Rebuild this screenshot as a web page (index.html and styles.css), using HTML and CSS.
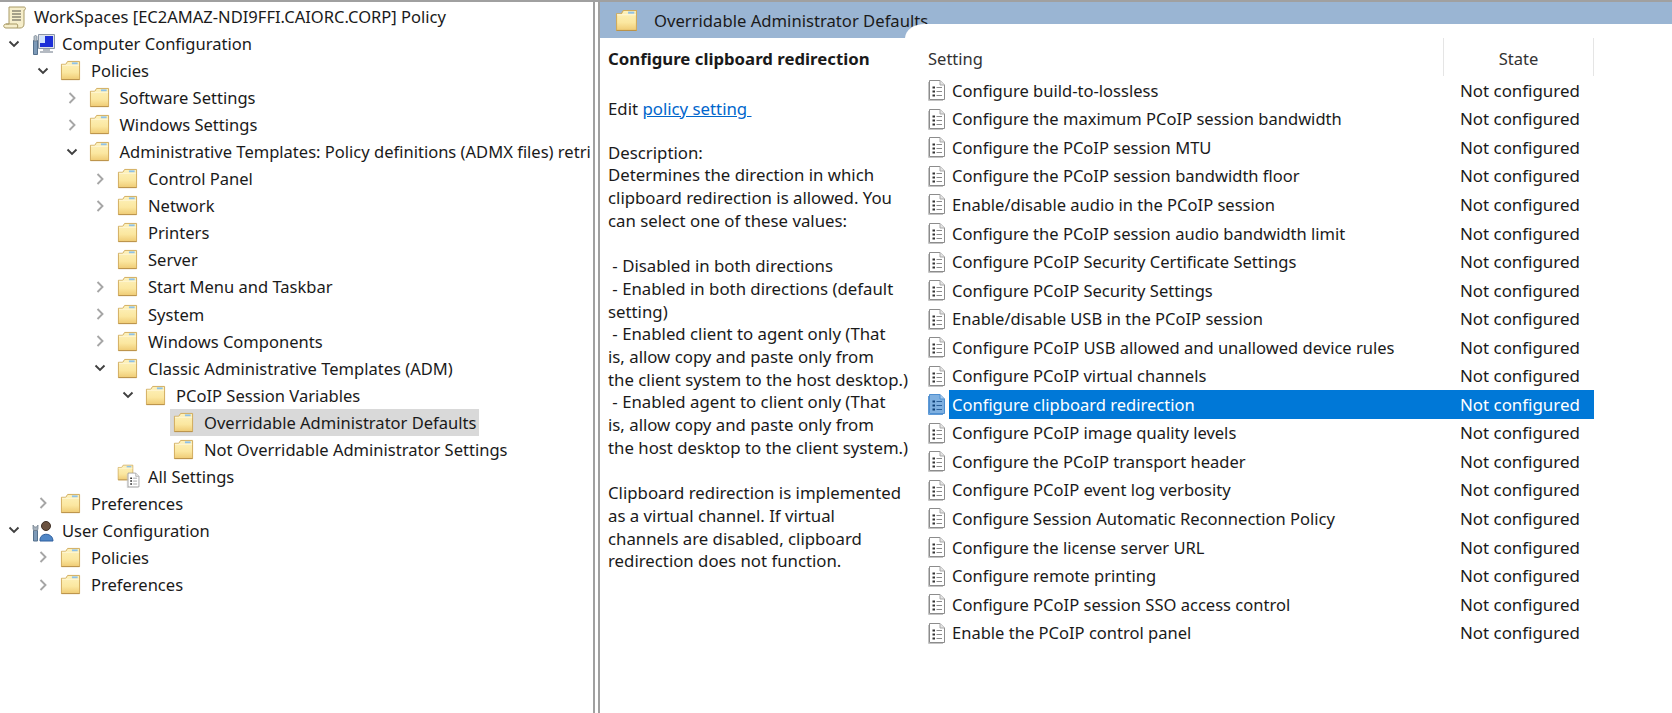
FILE: index.html
```html
<!DOCTYPE html>
<html>

<head>
    <title>Group Policy Management Editor</title>
    <link rel="stylesheet" href="styles.css">
</head>

<body>
    <svg class="defs" width="0" height="0">
        <defs>
            <linearGradient id="folderFill" x1="0" y1="0" x2="0" y2="1">
                <stop offset="0" stop-color="#fdf2bd" />
                <stop offset="0.6" stop-color="#fbe7a0" />
                <stop offset="1" stop-color="#efcb74" />
            </linearGradient>
            <symbol id="folder" viewBox="0 0 22 22">
                <path d="M1.5 4.5 V20.5 H20.5 V1.5 H8 L6 4.5 Z" fill="url(#folderFill)" stroke="#d0aa5a" />
                <path d="M1.5 20.5 H20.5" stroke="#b9924a" />
                <path d="M12.5 2.5 H18.5 V4.5 H12.5 Z" fill="#8fc1e8" />
                <path d="M2 5.5 H20" stroke="#fff8d8" />
            </symbol>
            <symbol id="policy" viewBox="0 0 20 22">
                <path d="M2.5 1.5 H13 L17.5 6 V20.5 H2.5 Z" fill="#fff" stroke="#8c8c8c" />
                <path d="M13 1.5 V6 H17.5" fill="#e4e4e4" stroke="#a8a8a8" />
                <path d="M1.5 3 V21.5 H16" fill="none" stroke="#c4c4c4" />
                <path d="M5.5 7.5 H8 V9.5 H5.5 Z M5.5 11.5 H8 V13.5 H5.5 Z M5.5 15.5 H8 V17.5 H5.5 Z" fill="#333" />
                <path d="M9.5 8.5 H15 M9.5 12.5 H15 M9.5 16.5 H15" stroke="#8a8a8a" />
            </symbol>
            <symbol id="policyOn" viewBox="0 0 20 22">
                <path d="M2.5 1.5 H13 L17.5 6 V20.5 H2.5 Z" fill="#7fb0e0" stroke="#4f8fd0" />
                <path d="M13 1.5 V6 H17.5" fill="#a9cbec" stroke="#4f8fd0" />
                <path d="M1.5 3 V21.5 H16" fill="none" stroke="#5f9ad6" />
                <path d="M5.5 7.5 H8 V9.5 H5.5 Z M5.5 11.5 H8 V13.5 H5.5 Z M5.5 15.5 H8 V17.5 H5.5 Z" fill="#0e3f75" />
                <path d="M9.5 8.5 H15 M9.5 12.5 H15 M9.5 16.5 H15" stroke="#2b5f99" />
            </symbol>
            <symbol id="open" viewBox="0 0 12 12">
                <path d="M1.5 3.5 L6 8 L10.5 3.5" fill="none" stroke="#404040" stroke-width="1.9" />
            </symbol>
            <symbol id="closed" viewBox="0 0 12 12">
                <path d="M3.5 1 L8.5 6 L3.5 11" fill="none" stroke="#a6a6a6" stroke-width="1.9" />
            </symbol>
        </defs>
    </svg>

    <div class="window">
        <div class="tree-pane">
            <div class="tree-row root">
                <svg class="icon-big" viewBox="0 0 24 24">
                    <path d="M6 2 H21 C23 2 23 5 21 5 V19 C21 22 19 23 17 23 H3 C0 23 0 19 3 19 H6 Z" fill="#f6eecb" stroke="#a89a66" />
                    <path d="M9 6 H18 M9 9 H18 M9 12 H18 M9 15 H18" stroke="#55524a" />
                    <path d="M3 19 H14 C15 20 15 22 14 23" fill="none" stroke="#a89a66" />
                </svg>
                <span class="tree-label">WorkSpaces [EC2AMAZ-NDI9FFI.CAIORC.CORP] Policy</span>
            </div>
            <div class="tree-row lv0">
                <svg class="arrow"><use href="#open" /></svg>
                <svg class="icon-big" viewBox="0 0 24 24">
                    <path d="M7.5 2.5 H23.5 V16.5 H7.5 Z" fill="#dfe3e8" stroke="#8b97a8" />
                    <path d="M9 4 H22 V15 H9 Z" fill="#1c2fd8" />
                    <path d="M9 4 H14 V11 H9 Z" fill="#cfe3ff" />
                    <path d="M12 17 H19 V19 H22 V21 H9 V19 H12 Z" fill="#b4bac2" />
                    <path d="M2.5 8.5 H6.5 V22.5 H2.5 Z" fill="#7d9ab8" stroke="#55708c" />
                    <path d="M3 5 C3 3 6 3 6 5 V9 H3 Z" fill="#b9c3cc" stroke="#6c7a88" stroke-width="0.7" />
                </svg>
                <span class="tree-label">Computer Configuration</span>
            </div>
            <div class="tree-row lv1">
                <svg class="arrow"><use href="#open" /></svg>
                <svg class="icon"><use href="#folder" /></svg>
                <span class="tree-label">Policies</span>
            </div>
            <div class="tree-row lv2">
                <svg class="arrow"><use href="#closed" /></svg>
                <svg class="icon"><use href="#folder" /></svg>
                <span class="tree-label">Software Settings</span>
            </div>
            <div class="tree-row lv2">
                <svg class="arrow"><use href="#closed" /></svg>
                <svg class="icon"><use href="#folder" /></svg>
                <span class="tree-label">Windows Settings</span>
            </div>
            <div class="tree-row lv2">
                <svg class="arrow"><use href="#open" /></svg>
                <svg class="icon"><use href="#folder" /></svg>
                <span class="tree-label">Administrative Templates: Policy definitions (ADMX files) retri</span>
            </div>
            <div class="tree-row lv3">
                <svg class="arrow"><use href="#closed" /></svg>
                <svg class="icon"><use href="#folder" /></svg>
                <span class="tree-label">Control Panel</span>
            </div>
            <div class="tree-row lv3">
                <svg class="arrow"><use href="#closed" /></svg>
                <svg class="icon"><use href="#folder" /></svg>
                <span class="tree-label">Network</span>
            </div>
            <div class="tree-row lv3">
                <span class="arrow"></span>
                <svg class="icon"><use href="#folder" /></svg>
                <span class="tree-label">Printers</span>
            </div>
            <div class="tree-row lv3">
                <span class="arrow"></span>
                <svg class="icon"><use href="#folder" /></svg>
                <span class="tree-label">Server</span>
            </div>
            <div class="tree-row lv3">
                <svg class="arrow"><use href="#closed" /></svg>
                <svg class="icon"><use href="#folder" /></svg>
                <span class="tree-label">Start Menu and Taskbar</span>
            </div>
            <div class="tree-row lv3">
                <svg class="arrow"><use href="#closed" /></svg>
                <svg class="icon"><use href="#folder" /></svg>
                <span class="tree-label">System</span>
            </div>
            <div class="tree-row lv3">
                <svg class="arrow"><use href="#closed" /></svg>
                <svg class="icon"><use href="#folder" /></svg>
                <span class="tree-label">Windows Components</span>
            </div>
            <div class="tree-row lv3">
                <svg class="arrow"><use href="#open" /></svg>
                <svg class="icon"><use href="#folder" /></svg>
                <span class="tree-label">Classic Administrative Templates (ADM)</span>
            </div>
            <div class="tree-row lv4">
                <svg class="arrow"><use href="#open" /></svg>
                <svg class="icon"><use href="#folder" /></svg>
                <span class="tree-label">PCoIP Session Variables</span>
            </div>
            <div class="tree-row lv5">
                <span class="arrow"></span>
                <div class="tree-selected">
                    <svg class="icon"><use href="#folder" /></svg>
                    <span class="tree-label">Overridable Administrator Defaults</span>
                </div>
            </div>
            <div class="tree-row lv5">
                <span class="arrow"></span>
                <div class="tree-plain">
                    <svg class="icon"><use href="#folder" /></svg>
                    <span class="tree-label">Not Overridable Administrator Settings</span>
                </div>
            </div>
            <div class="tree-row lv3">
                <span class="arrow"></span>
                <svg class="icon-big" viewBox="0 0 24 24">
                    <use href="#folder" width="17" height="17" x="0" y="0" />
                    <use href="#policy" width="15" height="16" x="9" y="8" />
                </svg>
                <span class="tree-label">All Settings</span>
            </div>
            <div class="tree-row lv1">
                <svg class="arrow"><use href="#closed" /></svg>
                <svg class="icon"><use href="#folder" /></svg>
                <span class="tree-label">Preferences</span>
            </div>
            <div class="tree-row lv0">
                <svg class="arrow"><use href="#open" /></svg>
                <svg class="icon-big" viewBox="0 0 24 24">
                    <path d="M9 23 C8 14 22 14 22 23 Z" fill="#4f86c6" stroke="#2f5f9e" />
                    <circle cx="15" cy="8" r="4.5" fill="#6b5240" stroke="#3f3026" />
                    <path d="M2.5 12.5 H6.5 V23 H2.5 Z" fill="#7d9ab8" stroke="#55708c" />
                    <path d="M2 7 V11 C2 13 7 13 7 11 V7 L5.5 9 H3.5 Z" fill="#a7b2bd" stroke="#6c7a88" stroke-width="0.7" />
                </svg>
                <span class="tree-label">User Configuration</span>
            </div>
            <div class="tree-row lv1">
                <svg class="arrow"><use href="#closed" /></svg>
                <svg class="icon"><use href="#folder" /></svg>
                <span class="tree-label">Policies</span>
            </div>
            <div class="tree-row lv1">
                <svg class="arrow"><use href="#closed" /></svg>
                <svg class="icon"><use href="#folder" /></svg>
                <span class="tree-label">Preferences</span>
            </div>
        </div>

        <div class="splitter"></div>

        <div class="main-pane">
            <div class="band">
                <div class="band-title">
                    <svg class="band-icon"><use href="#folder" /></svg>
                    <span>Overridable Administrator Defaults</span>
                </div>
                <div class="band-notch"></div>
            </div>

            <div class="content">
                <div class="description">
                    <h1 class="desc-title">Configure clipboard redirection</h1>
                    <p class="desc-edit">Edit <a class="desc-link" href="#">policy setting&nbsp;</a></p>
                    <p class="desc-text">Description:<br>Determines the direction in which<br>clipboard redirection is allowed. You<br>can select one of these values:</p>
                    <p class="desc-text">&nbsp;- Disabled in both directions<br>&nbsp;- Enabled in both directions (default<br>setting)<br>&nbsp;- Enabled client to agent only (That<br>is, allow copy and paste only from<br>the client system to the host desktop.)<br>&nbsp;- Enabled agent to client only (That<br>is, allow copy and paste only from<br>the host desktop to the client system.)</p>
                    <p class="desc-text">Clipboard redirection is implemented<br>as a virtual channel. If virtual<br>channels are disabled, clipboard<br>redirection does not function.</p>
                </div>

                <div class="list">
                    <div class="list-head">
                        <div class="head-setting">Setting</div>
                        <div class="head-state">State</div>
                    </div>
                    <div class="list-row"><svg class="row-icon"><use href="#policy" /></svg><span class="row-name">Configure build-to-lossless</span><span class="row-state">Not configured</span></div>
                    <div class="list-row"><svg class="row-icon"><use href="#policy" /></svg><span class="row-name">Configure the maximum PCoIP session bandwidth</span><span class="row-state">Not configured</span></div>
                    <div class="list-row"><svg class="row-icon"><use href="#policy" /></svg><span class="row-name">Configure the PCoIP session MTU</span><span class="row-state">Not configured</span></div>
                    <div class="list-row"><svg class="row-icon"><use href="#policy" /></svg><span class="row-name">Configure the PCoIP session bandwidth floor</span><span class="row-state">Not configured</span></div>
                    <div class="list-row"><svg class="row-icon"><use href="#policy" /></svg><span class="row-name">Enable/disable audio in the PCoIP session</span><span class="row-state">Not configured</span></div>
                    <div class="list-row"><svg class="row-icon"><use href="#policy" /></svg><span class="row-name">Configure the PCoIP session audio bandwidth limit</span><span class="row-state">Not configured</span></div>
                    <div class="list-row"><svg class="row-icon"><use href="#policy" /></svg><span class="row-name">Configure PCoIP Security Certificate Settings</span><span class="row-state">Not configured</span></div>
                    <div class="list-row"><svg class="row-icon"><use href="#policy" /></svg><span class="row-name">Configure PCoIP Security Settings</span><span class="row-state">Not configured</span></div>
                    <div class="list-row"><svg class="row-icon"><use href="#policy" /></svg><span class="row-name">Enable/disable USB in the PCoIP session</span><span class="row-state">Not configured</span></div>
                    <div class="list-row"><svg class="row-icon"><use href="#policy" /></svg><span class="row-name">Configure PCoIP USB allowed and unallowed device rules</span><span class="row-state">Not configured</span></div>
                    <div class="list-row"><svg class="row-icon"><use href="#policy" /></svg><span class="row-name">Configure PCoIP virtual channels</span><span class="row-state">Not configured</span></div>
                    <div class="list-row selected"><svg class="row-icon"><use href="#policyOn" /></svg><span class="row-name">Configure clipboard redirection</span><span class="row-state">Not configured</span></div>
                    <div class="list-row"><svg class="row-icon"><use href="#policy" /></svg><span class="row-name">Configure PCoIP image quality levels</span><span class="row-state">Not configured</span></div>
                    <div class="list-row"><svg class="row-icon"><use href="#policy" /></svg><span class="row-name">Configure the PCoIP transport header</span><span class="row-state">Not configured</span></div>
                    <div class="list-row"><svg class="row-icon"><use href="#policy" /></svg><span class="row-name">Configure PCoIP event log verbosity</span><span class="row-state">Not configured</span></div>
                    <div class="list-row"><svg class="row-icon"><use href="#policy" /></svg><span class="row-name">Configure Session Automatic Reconnection Policy</span><span class="row-state">Not configured</span></div>
                    <div class="list-row"><svg class="row-icon"><use href="#policy" /></svg><span class="row-name">Configure the license server URL</span><span class="row-state">Not configured</span></div>
                    <div class="list-row"><svg class="row-icon"><use href="#policy" /></svg><span class="row-name">Configure remote printing</span><span class="row-state">Not configured</span></div>
                    <div class="list-row"><svg class="row-icon"><use href="#policy" /></svg><span class="row-name">Configure PCoIP session SSO access control</span><span class="row-state">Not configured</span></div>
                    <div class="list-row"><svg class="row-icon"><use href="#policy" /></svg><span class="row-name">Enable the PCoIP control panel</span><span class="row-state">Not configured</span></div>
                </div>
            </div>
        </div>
    </div>
</body>

</html>
```

FILE: styles.css
```css
* {
    margin: 0px;
    box-sizing: border-box;
}

html,
body {
    height: 100%;
    overflow: hidden;
}

body {
    background-color: white;
    color: #1a1a1a;
    font-family: "Noto Sans", "Open Sans", sans-serif;
    font-size: 16.55px;
}

.defs {
    display: block;
    height: 0;
}

.window {
    display: flex;
    height: 713px;
    border-top: 2px solid #a0a0a0;
}

/* left tree */
.tree-pane {
    width: 593px;
    flex-shrink: 0;
    overflow: hidden;
    padding-top: 1px;
}

.tree-row {
    display: flex;
    align-items: center;
    height: 27.05px;
    white-space: nowrap;
}

.root { padding-left: 3px; }
.lv0 { padding-left: 8px; }
.lv1 { padding-left: 37px; }
.lv2 { padding-left: 65.5px; }
.lv3 { padding-left: 94px; }
.lv4 { padding-left: 122px; }
.lv5 { padding-left: 147px; }

.arrow {
    display: block;
    width: 12px;
    height: 12px;
    margin-right: 11px;
    flex-shrink: 0;
}

.icon {
    display: block;
    width: 21px;
    height: 21px;
    flex-shrink: 0;
}

.icon-big {
    display: block;
    width: 24px;
    height: 24px;
    margin-right: -3px;
    flex-shrink: 0;
}

.tree-label {
    padding-left: 10px;
}

.tree-selected,
.tree-plain {
    display: flex;
    align-items: center;
    height: 27px;
    padding-left: 3px;
    padding-right: 3px;
}

.tree-selected {
    background-color: #d9d9d9;
}

.splitter {
    width: 7px;
    flex-shrink: 0;
    border-left: 2px solid #a0a0a0;
    border-right: 2px solid #a0a0a0;
}

/* right side */
.main-pane {
    flex: 1;
    min-width: 0;
}

.band {
    display: flex;
    height: 36px;
    background-color: #9ab5d3;
}

.band-title {
    display: flex;
    align-items: center;
    width: 305px;
    padding-left: 15px;
    white-space: nowrap;
    font-size: 16.65px;
}

.band-icon {
    display: block;
    width: 23px;
    height: 23px;
    margin-right: 16px;
    flex-shrink: 0;
}

.band-notch {
    flex: 1;
    margin-top: 22px;
    background-color: white;
    border-top-left-radius: 20px 14px;
}

.content {
    display: flex;
}

.description {
    width: 319px;
    padding: 9px 0 0 8px;
    flex-shrink: 0;
    font-size: 16.8px;
    line-height: 22.7px;
    white-space: nowrap;
}

.desc-title {
    font-size: 16.8px;
    font-weight: bold;
    line-height: 24px;
    margin-bottom: 27px;
}

.desc-edit {
    margin-bottom: 21px;
}

.desc-link {
    color: #0066cc;
}

.desc-text {
    margin-bottom: 22.7px;
}

.list {
    width: 675px;
}

.list-head {
    display: flex;
    height: 38px;
}

.head-setting {
    width: 524px;
    padding: 9px 0 0 9px;
    color: #333;
}

.head-state {
    width: 151px;
    padding-top: 9px;
    text-align: center;
    color: #333;
    border-left: 1px solid #e5e5e5;
    border-right: 1px solid #e5e5e5;
}

.list-row {
    display: flex;
    align-items: center;
    height: 28.56px;
    white-space: nowrap;
}

.row-icon {
    display: block;
    width: 20px;
    height: 22px;
    margin-left: 8px;
    margin-right: 2px;
    flex-shrink: 0;
}

.row-name {
    width: 511px;
    padding-left: 3px;
}

.row-state {
    flex: 1;
    font-size: 16.9px;
}

.selected .row-name,
.selected .row-state {
    background-color: #0078d7;
    color: white;
    height: 100%;
    display: flex;
    align-items: center;
}
```
